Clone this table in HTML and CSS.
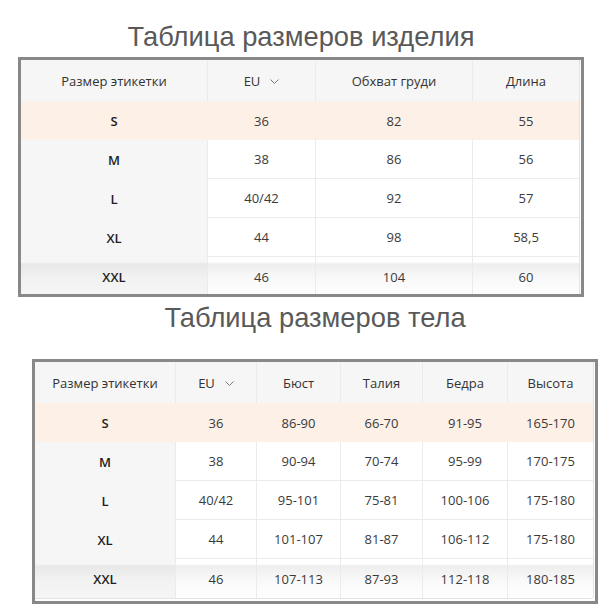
FILE: index.html
```html
<!DOCTYPE html>
<html lang="ru">
<head>
<meta charset="utf-8">
<title>Таблица размеров</title>
<link rel="stylesheet" href="styles.css">
</head>
<body>
<section class="block block-product">
  <h2 class="title">Таблица размеров изделия</h2>
  <div class="frame frame-product">
    <div class="scroller">
      <table class="sizes">
        <colgroup><col style="width:186px"><col style="width:108px"><col style="width:157px"><col style="width:107px"></colgroup>
        <thead>
          <tr><th>Размер этикетки</th><th>EU<svg class="chev" width="9" height="5" viewBox="0 0 9 5"><path d="M0.5 0.5L4.5 4.5L8.5 0.5" fill="none" stroke="#7a7a7a" stroke-width="1"/></svg></th><th>Обхват груди</th><th>Длина</th></tr>
        </thead>
        <tbody>
          <tr class="row-active"><th>S</th><td>36</td><td>82</td><td>55</td></tr>
          <tr class="row-mid"><th>M</th><td>38</td><td>86</td><td>56</td></tr>
          <tr class="row-mid"><th>L</th><td>40/42</td><td>92</td><td>57</td></tr>
          <tr class="row-mid"><th>XL</th><td>44</td><td>98</td><td>58,5</td></tr>
          <tr class="row-total"><th>XXL</th><td>46</td><td>104</td><td>60</td></tr>
        </tbody>
      </table>
    </div>
  </div>
</section>
<section class="block block-body">
  <h2 class="title">Таблица размеров тела</h2>
  <div class="frame frame-body">
    <div class="scroller">
      <table class="sizes">
        <colgroup><col style="width:140px"><col style="width:81px"><col style="width:84px"><col style="width:82px"><col style="width:85px"><col style="width:86px"></colgroup>
        <thead>
          <tr><th>Размер этикетки</th><th>EU<svg class="chev" width="9" height="5" viewBox="0 0 9 5"><path d="M0.5 0.5L4.5 4.5L8.5 0.5" fill="none" stroke="#7a7a7a" stroke-width="1"/></svg></th><th>Бюст</th><th>Талия</th><th>Бедра</th><th>Высота</th></tr>
        </thead>
        <tbody>
          <tr class="row-active"><th>S</th><td>36</td><td>86-90</td><td>66-70</td><td>91-95</td><td>165-170</td></tr>
          <tr class="row-mid"><th>M</th><td>38</td><td>90-94</td><td>70-74</td><td>95-99</td><td>170-175</td></tr>
          <tr class="row-mid"><th>L</th><td>40/42</td><td>95-101</td><td>75-81</td><td>100-106</td><td>175-180</td></tr>
          <tr class="row-mid"><th>XL</th><td>44</td><td>101-107</td><td>81-87</td><td>106-112</td><td>175-180</td></tr>
          <tr class="row-total"><th>XXL</th><td>46</td><td>107-113</td><td>87-93</td><td>112-118</td><td>180-185</td></tr>
        </tbody>
      </table>
    </div>
  </div>
</section>
</body>
</html>
```

FILE: styles.css
```css
* { box-sizing: border-box; }

body {
  margin: 0;
  background: #fff;
  font-family: "Open Sans", "Noto Sans", sans-serif;
}

.block { width: 566px; }
.block-product { margin-left: 18px; padding-top: 21px; }
.block-body { margin-left: 32px; margin-top: 5px; }

.title {
  margin: 0;
  font: 400 27.3px/32px "Liberation Sans", Arial, sans-serif;
  color: #595959;
  text-align: center;
}

.frame {
  border: 3px solid #888;
  padding-right: 1px;
  margin-top: 4px;
}
.frame-product { height: 240px; overflow: hidden; }
.frame-body { margin-top: 25px; padding-bottom: 2px; }

.scroller { border-right: 1px solid #e3e3e3; }
.frame-body .scroller {
  border-bottom: 1px solid #e3e3e3;
  border-bottom-right-radius: 4px;
  overflow: hidden;
}

.sizes {
  border-collapse: separate;
  border-spacing: 0;
  table-layout: fixed;
  width: 558px;
  font-size: 13px;
  color: #3a3a3a;
}

.sizes th,
.sizes td {
  padding: 0;
  height: 39px;
  text-align: center;
  vertical-align: middle;
  font-weight: 400;
  white-space: nowrap;
}

.sizes tr > * + * { border-left: 1px solid #ebebeb; }

.sizes thead th {
  height: 41px;
  background: #f6f6f6;
  color: #333;
}

.sizes tbody th {
  font-weight: 600;
  color: #1f1f1f;
  background: #f6f6f6;
}

.sizes td { background: #fff; }

.row-active th,
.row-active td {
  background: #fdf0e6 !important;
  border-left-color: #fdf0e6 !important;
}

.row-mid td { border-bottom: 1px solid #ebebeb; }

.row-total td {
  background: linear-gradient(to bottom, #fff 0, #fff 5px, #eeeeee 7px, #f9f9f9 55%, #fff 100%);
}
.sizes .row-total th {
  background: linear-gradient(to bottom, #f6f6f6 0, #f6f6f6 5px, #e8e8e8 7px, #f2f2f2 55%, #f5f5f5 100%);
}

.chev {
  margin-left: 10px;
  vertical-align: middle;
  position: relative;
  top: -1px;
}
```
